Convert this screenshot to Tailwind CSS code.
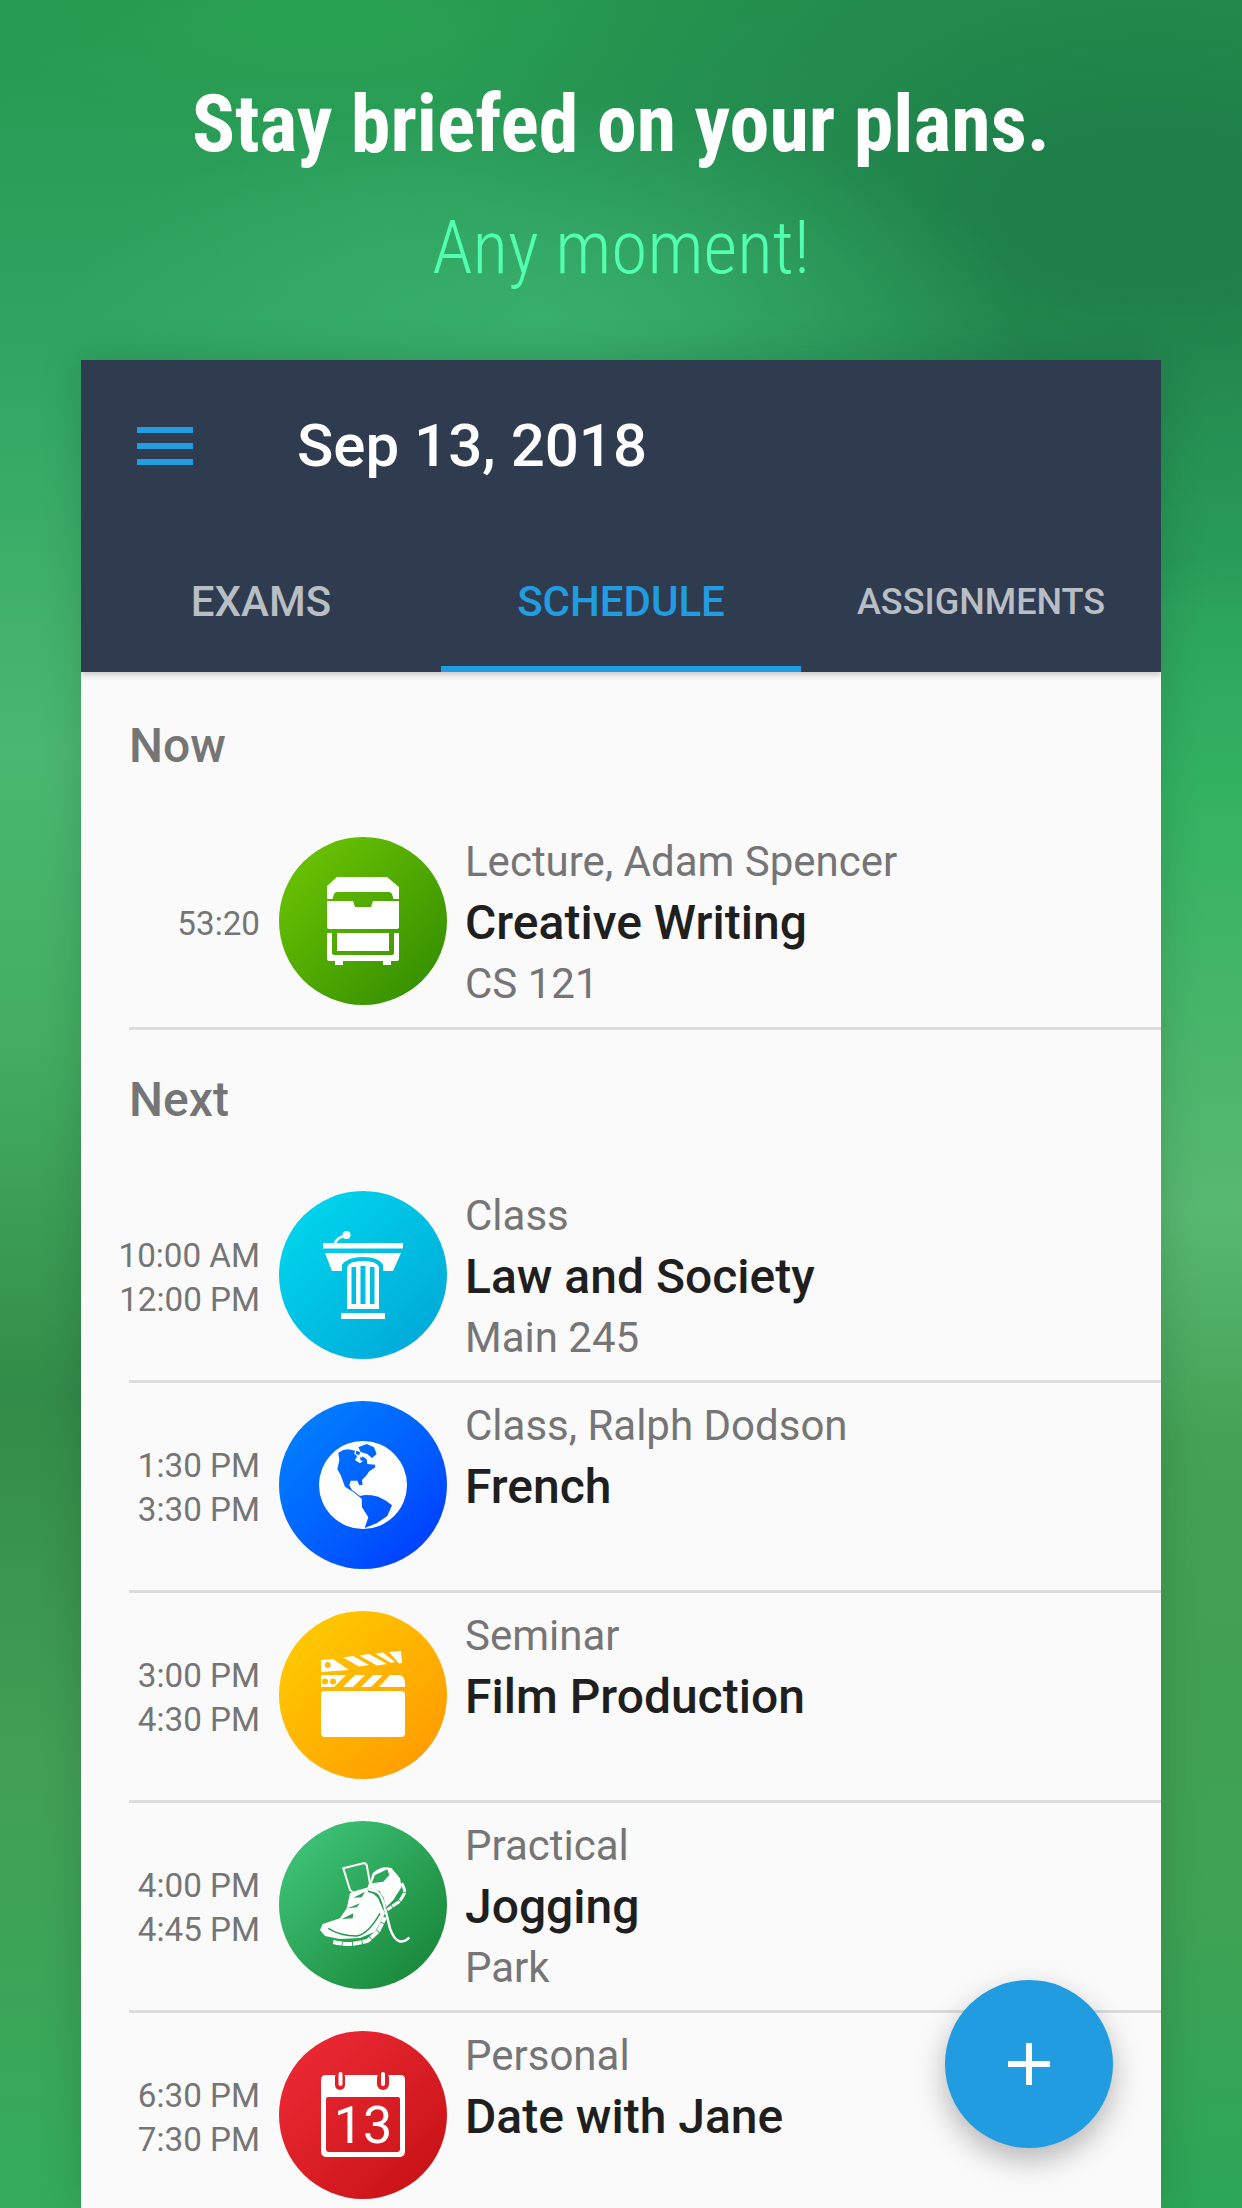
<!DOCTYPE html>
<html lang="en">

<head>
    <meta charset="UTF-8" />
    <title>Schedule</title>
    <meta name="viewport" content="width=device-width, initial-scale=1.0" />
    <script src="https://cdn.jsdelivr.net/npm/@tailwindcss/browser@4"></script>
</head>

<body class="relative h-[2208px] w-[1242px] overflow-hidden font-['Roboto',sans-serif] [background:radial-gradient(ellipse_480px_220px_at_540px_320px,#39af6c,transparent),radial-gradient(ellipse_760px_400px_at_1150px_210px,#1e7f48_18%,transparent),radial-gradient(ellipse_460px_130px_at_320px_20px,#28a152,transparent),linear-gradient(#26964f_0px,#2ba05b_200px,#30a562_360px,#4ab870_750px,#42ad62_1050px,#338c49_1395px,#429f55_1760px,#34ab5b_2208px)_left/50%_100%_no-repeat,linear-gradient(#26964f_0px,#2ba05b_200px,#30a562_360px,#2aa05b_560px,#33b262_790px,#58b872_1210px,#44a255_1440px,#41a052_1640px,#3fa254_1900px,#2ca659_2208px)_right/50%_100%_no-repeat]">

    <!-- Headline -->
    <div class="h-[360px] pt-[76px] text-center">
        <h1 class="text-[80px] leading-[96px] font-bold text-white [font-stretch:75%]">Stay briefed on your plans.</h1>
        <p class="mt-[32px] text-[73.5px] leading-[88px] [font-weight:350] text-[#52ffb0] [font-stretch:75%]">Any moment!</p>
    </div>

    <!-- App card -->
    <div class="relative mx-[81px] h-[1848px] overflow-hidden bg-[#fafafa] shadow-[0_0_40px_rgba(0,0,0,0.15)]">
        <header class="relative z-10 h-[312px] bg-[#2f3c4f] shadow-[0_3px_6px_rgba(0,0,0,0.2)]">
            <div class="flex h-[172px] items-center pl-[56px]">
                <div class="flex w-[160px] flex-col gap-[10px]">
                    <span class="block h-[6px] w-[56px] bg-[#229ce0]"></span>
                    <span class="block h-[6px] w-[56px] bg-[#229ce0]"></span>
                    <span class="block h-[6px] w-[56px] bg-[#229ce0]"></span>
                </div>
                <div class="text-[60px] font-medium text-white">Sep 13, 2018</div>
            </div>
            <nav class="grid h-[140px] grid-cols-3 text-center font-medium">
                <div class="pt-[45px] text-[42px] leading-[50px] text-[#b9bec5]">EXAMS</div>
                <div class="border-b-[6px] border-[#229ce0] pt-[45px] text-[42px] leading-[50px] text-[#229ce0]">SCHEDULE</div>
                <div class="pt-[45px] text-[36px] leading-[50px] text-[#b9bec5]">ASSIGNMENTS</div>
            </nav>
        </header>

        <!-- Now -->
        <h2 class="pl-[48px] pt-[46px] h-[147px] text-[48px] leading-[56px] font-medium text-[#757575]">Now</h2>
        <div class="flex h-[208px]">
            <div class="flex h-[168px] w-[179px] mt-[18px] pt-[5px] shrink-0 flex-col justify-center text-right text-[33.2px] leading-[44px] text-[#757575]">
                <span>53:20</span>
            </div>
            <div class="ml-[19px] mt-[18px] h-[168px] w-[168px] shrink-0 rounded-full bg-linear-to-br from-[#70c900] to-[#2d8a00]">
                <svg viewBox="0 0 168 168" class="h-full w-full" fill="#fff">
                    <path d="M48 49 58 40H108L120 50V62H114.500L113 57Q112 55 110 55H58Q56 55 55 57L53.500 62H48Z" />
                    <path d="M48 64H74L76 70H92L94 64H120V90Q120 92 118 92H50Q48 92 48 90Z" />
                    <path d="M48 96H53V116Q53 118 55 118H113Q115 118 115 116V96H120V122Q120 124 118 124H112V128H104V124H64V128H56V124H50Q48 124 48 122Z" />
                    <rect x="58" y="96" width="52" height="18" />
                </svg>
            </div>
            <div class="ml-[18px] pt-[12px]">
                <div class="text-[42px] leading-[61px] text-[#757575]">Lecture, Adam Spencer</div>
                <div class="text-[48px] leading-[61px] font-medium text-[#1f1f1f]">Creative Writing</div>
                <div class="text-[42px] leading-[61px] text-[#757575]">CS 121</div>
            </div>
        </div>
        <div class="ml-[48px] h-[3px] bg-[#dcdcdc]"></div>

        <!-- Next -->
        <h2 class="pl-[48px] pt-[42px] h-[143px] text-[48px] leading-[56px] font-medium text-[#757575]">Next</h2>

        <div class="flex h-[207px]">
            <div class="flex h-[168px] w-[179px] mt-[18px] pt-[5px] shrink-0 flex-col justify-center text-right text-[33.2px] leading-[44px] text-[#757575]">
                <span>10:00 AM</span>
                <span>12:00 PM</span>
            </div>
            <div class="ml-[19px] mt-[18px] h-[168px] w-[168px] shrink-0 rounded-full bg-linear-to-br from-[#00dbef] to-[#00a4d6]">
                <svg viewBox="0 0 168 168" class="h-full w-full" fill="#fff">
                    <circle cx="67.500" cy="44" r="4" />
                    <path d="M56 52Q58 47 65 45" fill="none" stroke="#fff" stroke-width="2.500" />
                    <rect x="44" y="52" width="80" height="5.500" />
                    <path fill-rule="evenodd" d="M46 62H122L114 80H104V74Q100 66 84 66Q68 66 63 74V80H53Z" />
                    <path fill-rule="evenodd" d="M68 76Q70 70 84 70Q98 70 100 76V118H68ZM72.500 76V113H77V76ZM81.500 75V113H86.500V75ZM91 76V113H95.500V76Z" />
                    <rect x="62" y="122" width="44" height="6" />
                </svg>
            </div>
            <div class="ml-[18px] pt-[12px]">
                <div class="text-[42px] leading-[61px] text-[#757575]">Class</div>
                <div class="text-[48px] leading-[61px] font-medium text-[#1f1f1f]">Law and Society</div>
                <div class="text-[42px] leading-[61px] text-[#757575]">Main 245</div>
            </div>
        </div>
        <div class="ml-[48px] h-[3px] bg-[#dcdcdc]"></div>

        <div class="flex h-[207px]">
            <div class="flex h-[168px] w-[179px] mt-[18px] pt-[5px] shrink-0 flex-col justify-center text-right text-[33.2px] leading-[44px] text-[#757575]">
                <span>1:30 PM</span>
                <span>3:30 PM</span>
            </div>
            <div class="ml-[19px] mt-[18px] h-[168px] w-[168px] shrink-0 rounded-full bg-linear-to-br from-[#0086ff] to-[#0030ff]">
                <svg viewBox="0 0 168 168" class="h-full w-full">
                    <mask id="globe-mask">
                        <circle cx="84" cy="84" r="44" fill="#fff" />
                        <g transform="translate(31 29) scale(.3333)" fill="#000">
                            <path d="M85 68 100 60 115 58 135 62 133 72 142 78 135 90 150 100 160 92 155 78 170 88 172 102 195 104 196 112 178 124 168 138 156 150 158 164 148 166 142 152 122 152 118 166 126 180 150 198 165 195 185 196 205 200 228 212 246 226 232 258 200 280 164 294 175 262 156 232 155 206 130 186 105 170 92 135 82 118 88 90Z" />
                            <path d="M145 52 170 42 192 52 200 72 186 84 172 72 152 66Z" />
                            <path d="M138 62 150 66 148 76 138 72ZM150 82 165 84 160 92 152 92Z" />
                        </g>
                    </mask>
                    <rect width="168" height="168" fill="#fff" mask="url(#globe-mask)" />
                </svg>
            </div>
            <div class="ml-[18px] pt-[12px]">
                <div class="text-[42px] leading-[61px] text-[#757575]">Class, Ralph Dodson</div>
                <div class="text-[48px] leading-[61px] font-medium text-[#1f1f1f]">French</div>
            </div>
        </div>
        <div class="ml-[48px] h-[3px] bg-[#dcdcdc]"></div>

        <div class="flex h-[207px]">
            <div class="flex h-[168px] w-[179px] mt-[18px] pt-[5px] shrink-0 flex-col justify-center text-right text-[33.2px] leading-[44px] text-[#757575]">
                <span>3:00 PM</span>
                <span>4:30 PM</span>
            </div>
            <div class="ml-[19px] mt-[18px] h-[168px] w-[168px] shrink-0 rounded-full bg-linear-to-br from-[#ffd000] to-[#ff9500]">
                <svg viewBox="0 0 168 168" class="h-full w-full" fill="#fff">
                    <rect x="42" y="80" width="84" height="46" rx="4" />
                    <path fill-rule="evenodd" d="M42 49 54 48 70 59 42 61ZM48.700 51A3 3 0 1 0 48.710 57 3 3 0 1 0 48.700 51Z" />
                    <path d="M64 46.500 74 45 90 54 80 55.500Z" />
                    <path d="M80 44.500 90 43 108 53 98 54.500Z" />
                    <path d="M96 42.500 104 41.500 116 51 112 52Z" />
                    <path d="M110 41 122 40 123 52 120 52.500Z" />
                    <path fill-rule="evenodd" d="M42 64H67L55 76H42ZM46 67.500A3 3 0 1 0 46.010 73.500 3 3 0 1 0 46 67.500ZM54 67.500A3 3 0 1 0 54.010 73.500 3 3 0 1 0 54 67.500Z" />
                    <path d="M76 64H86L74 76H64Z" />
                    <path d="M94 64H104L92 76H82Z" />
                    <path d="M111 64H121Q126 66 126 72V76H100Z" />
                </svg>
            </div>
            <div class="ml-[18px] pt-[12px]">
                <div class="text-[42px] leading-[61px] text-[#757575]">Seminar</div>
                <div class="text-[48px] leading-[61px] font-medium text-[#1f1f1f]">Film Production</div>
            </div>
        </div>
        <div class="ml-[48px] h-[3px] bg-[#dcdcdc]"></div>

        <div class="flex h-[207px]">
            <div class="flex h-[168px] w-[179px] mt-[18px] pt-[5px] shrink-0 flex-col justify-center text-right text-[33.2px] leading-[44px] text-[#757575]">
                <span>4:00 PM</span>
                <span>4:45 PM</span>
            </div>
            <div class="ml-[19px] mt-[18px] h-[168px] w-[168px] shrink-0 rounded-full bg-linear-to-br from-[#42cb80] to-[#148030]">
                <svg viewBox="0 0 168 168" class="h-full w-full" fill="#fff">
                    <!-- tongue -->
                    <path d="M64.300 47.300 84.300 42.300Q87 42 87.700 44L91 62.300 89.300 67.300 74.300 71.700 71 69Z" fill="none" stroke="#fff" stroke-width="2" />
                    <!-- heel with collar opening -->
                    <path fill-rule="evenodd" d="M93.700 52.300Q102.700 44 112.700 47.300L121 57.300 122.700 65.700 114.300 79 107 86.300 104.300 75.700 99.300 70.700 89.300 66.300ZM92.700 62.300 96 54 108.300 48.300 110.300 54 104.300 60.700Z" />
                    <path d="M122.700 62.300Q127 70 125 73 122 79 119.300 81.300L108.300 88.700" fill="none" stroke="#fff" stroke-width="3" stroke-dasharray="9 .8" />
                    <!-- body and sole -->
                    <path d="M89.300 68.300 99.300 77.300 106 92.300 96 110.700 81 117 61 118 46 115 41 109 43.700 103 61 97.300 67.700 87.300 71 72.300Z" />
                    <path d="M49.300 107.300Q61 115 77.700 115 89.300 113 101 92.300" fill="none" stroke="#269a52" stroke-width="1.500" />
                    <path d="M74.300 76.700 86 70.700 82.700 76.300ZM68.700 87.300 81 82.300 77.700 86.300ZM62.700 98 74.300 92.300 73.700 97.300Z" fill="#2a9e55" />
                    <path d="M54.300 121Q62 123 71 123 82 122 89.300 119.300L99.300 110 106 96.300" fill="none" stroke="#fff" stroke-width="4" stroke-dasharray="9 .8" />
                    <!-- lace -->
                    <path d="M89.300 69 99.300 72 106 88" fill="none" stroke="#269a52" stroke-width="4" />
                    <path d="M89.300 68 98 70.700Q103 74 106 87.300L111 107.300Q115 119 121 120.500 126 121 130.300 116.300" fill="none" stroke="#fff" stroke-width="2.500" />
                </svg>
            </div>
            <div class="ml-[18px] pt-[12px]">
                <div class="text-[42px] leading-[61px] text-[#757575]">Practical</div>
                <div class="text-[48px] leading-[61px] font-medium text-[#1f1f1f]">Jogging</div>
                <div class="text-[42px] leading-[61px] text-[#757575]">Park</div>
            </div>
        </div>
        <div class="ml-[48px] h-[3px] bg-[#dcdcdc]"></div>

        <div class="flex h-[207px]">
            <div class="flex h-[168px] w-[179px] mt-[18px] pt-[5px] shrink-0 flex-col justify-center text-right text-[33.2px] leading-[44px] text-[#757575]">
                <span>6:30 PM</span>
                <span>7:30 PM</span>
            </div>
            <div class="ml-[19px] mt-[18px] h-[168px] w-[168px] shrink-0 rounded-full bg-linear-to-br from-[#f02b38] to-[#c40f0f]">
                <svg viewBox="0 0 168 168" class="h-full w-full" fill="#fff">
                    <path fill-rule="evenodd" d="M47 44H122Q126 44 126 49V120Q126 126 120 126H48Q42 126 42 120V49Q42 44 47 44ZM49 66Q47 66 47 68V118Q47 121 50 121H118Q121 121 121 118V68Q121 66 119 66Z" />
                    <rect x="56" y="41" width="10" height="18" rx="5" fill="#df2029" />
                    <rect x="98" y="41" width="12" height="18" rx="6" fill="#df2029" />
                    <rect x="59.500" y="41" width="4" height="14" rx="2" fill="#fff" />
                    <rect x="102" y="41" width="4" height="14" rx="2" fill="#fff" />
                    <text x="84" y="112" text-anchor="middle" font-family="Roboto" font-size="52">13</text>
                </svg>
            </div>
            <div class="ml-[18px] pt-[12px]">
                <div class="text-[42px] leading-[61px] text-[#757575]">Personal</div>
                <div class="text-[48px] leading-[61px] font-medium text-[#1f1f1f]">Date with Jane</div>
            </div>
        </div>

        <!-- Add button -->
        <button class="absolute bottom-[60px] right-[48px] flex h-[168px] w-[168px] items-center justify-center rounded-full bg-[#229ce0] shadow-[0_12px_30px_rgba(0,0,0,0.28)]">
            <svg viewBox="0 0 42 42" class="h-[42px] w-[42px]" fill="#fff">
                <rect x="18" y="0" width="6" height="42" />
                <rect x="0" y="18" width="42" height="6" />
            </svg>
        </button>
    </div>
</body>

</html>
